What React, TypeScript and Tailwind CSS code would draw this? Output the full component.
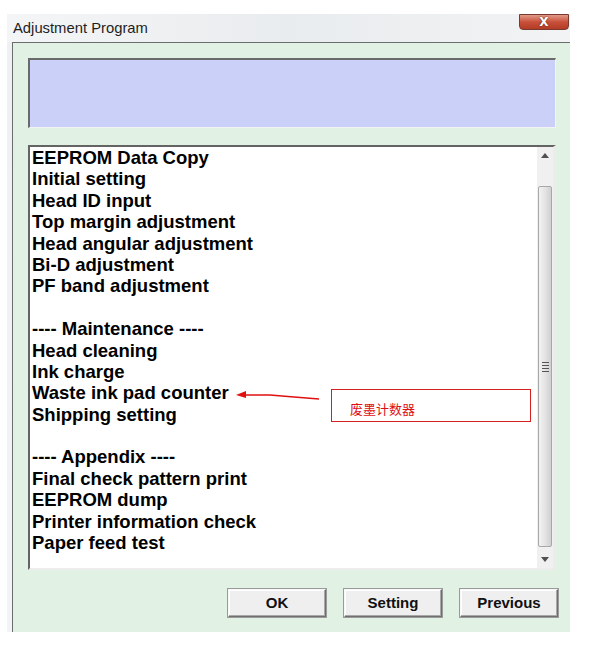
import React from "react";

const items: string[] = [
  "EEPROM Data Copy",
  "Initial setting",
  "Head ID input",
  "Top margin adjustment",
  "Head angular adjustment",
  "Bi-D adjustment",
  "PF band adjustment",
  "",
  "---- Maintenance ----",
  "Head cleaning",
  "Ink charge",
  "Waste ink pad counter",
  "Shipping setting",
  "",
  "---- Appendix ----",
  "Final check pattern print",
  "EEPROM dump",
  "Printer information check",
  "Paper feed test",
];

function Btn({ label }: { label: string }) {
  return (
    <div className="w-[98px] h-[28px] flex items-center justify-center bg-[#efefef] border border-t-[#f8f8f8] border-l-[#f8f8f8] border-r-[#6f6f6f] border-b-[#6f6f6f] shadow-[inset_-1px_-1px_0_#a8a8a8,inset_1px_1px_0_#ffffff] outline outline-1 outline-[#9a9a9a]">
      <span className="font-['Liberation_Sans',Arial,sans-serif] font-bold text-[15px] text-[#111]">{label}</span>
    </div>
  );
}

export default function App() {
  return (
    <div className="w-[604px] h-[647px] bg-white relative overflow-hidden">
      <div className="pt-[14px] pl-[7px]">
        <div className="w-[563px] flex flex-col bg-gradient-to-b from-[#eef0f2] to-[#f3f4f5]">
          {/* title bar */}
          <div className="h-[28px] flex items-start justify-between bg-gradient-to-r from-[#f4f5f6] via-[#e9ecee] to-[#f1f3f4] relative">
            <span className="font-['Liberation_Sans',Arial,sans-serif] text-[14.8px] text-[#1e1e1e] pl-[6px] pt-[3px]">
              Adjustment Program
            </span>
            <div className="w-[50px] h-[16px] mr-[1px] rounded-b-[4px] bg-gradient-to-b from-[#e29a88] via-[#c8503a] to-[#b33c26] border border-[#7a3a30] flex items-center justify-center">
              <span className="font-['DejaVu_Sans',sans-serif] font-bold text-[12px] leading-none text-white [text-shadow:0_0_2px_#5a1a10]">X</span>
            </div>
          </div>
          {/* client area */}
          <div className="ml-[5px] w-[558px] h-[590px] bg-[#e1f2e4] border-l border-t border-[#6b6e70] pl-[15px] pt-[15px] flex flex-col">
            <div className="w-[528px] h-[70px] bg-[#cbd0f8] border-t-2 border-l-2 border-t-[#6a6a6a] border-l-[#6a6a6a] border-b border-r border-b-[#f4f4f4] border-r-[#f4f4f4]" />
            <div className="mt-[17px] w-[528px] h-[425px] bg-white border-t-2 border-l-2 border-t-[#646464] border-l-[#646464] border-b-2 border-r-[3px] border-b-[#ececec] border-r-[#ececec] flex">
              <div className="flex-1 pl-[2px]">
                {items.map((t, i) => (
                  <div key={i} className="h-[21.4px] leading-[21.4px] font-['Liberation_Sans',Arial,sans-serif] font-bold text-[18.5px] text-black whitespace-pre">
                    {t}
                  </div>
                ))}
              </div>
              <div className="w-[16px] h-full bg-[#f0f0f0] flex flex-col">
                <div className="h-[17px] flex items-center justify-center">
                  <svg width="8" height="5" viewBox="0 0 8 5"><path d="M4 0 L8 5 L0 5 Z" fill="#505050" /></svg>
                </div>
                <div className="h-[22px]" />
                <div className="flex-1 mx-[1px] rounded-[2px] border border-[#a8a8a8] bg-gradient-to-r from-[#f2f2f2] via-[#e4e4e4] to-[#d0d0d0] flex items-center justify-center">
                  <div className="flex flex-col gap-[2px]">
                    <div className="w-[7px] h-[1px] bg-[#555]" />
                    <div className="w-[7px] h-[1px] bg-[#555]" />
                    <div className="w-[7px] h-[1px] bg-[#555]" />
                    <div className="w-[7px] h-[1px] bg-[#555]" />
                  </div>
                </div>
                <div className="h-[4px]" />
                <div className="h-[17px] flex items-center justify-center">
                  <svg width="8" height="5" viewBox="0 0 8 5"><path d="M0 0 L8 0 L4 5 Z" fill="#505050" /></svg>
                </div>
              </div>
            </div>
            <div className="mt-[19px] w-[530px] flex justify-end gap-[18px]">
              <Btn label="OK" />
              <Btn label="Setting" />
              <Btn label="Previous" />
            </div>
          </div>
        </div>
      </div>

      {/* annotation arrow */}
      <svg className="absolute left-[230px] top-[385px]" width="100" height="20" viewBox="0 0 100 20">
        <path d="M6 10 L16 6 L16 13 Z" fill="#e01010" />
        <path d="M14 10 L40 10 L64 12 L89 14" stroke="#e01010" strokeWidth="1.3" fill="none" />
      </svg>
      {/* annotation box */}
      <div className="absolute left-[331px] top-[389px] w-[200px] h-[33px] border border-[#d42020] flex items-end pl-[18px] pb-[2px]">
        <span className="font-['Noto_Sans_CJK_SC',sans-serif] text-[13px] leading-[20px] text-[#e01010]">废墨计数器</span>
      </div>
    </div>
  );
}
